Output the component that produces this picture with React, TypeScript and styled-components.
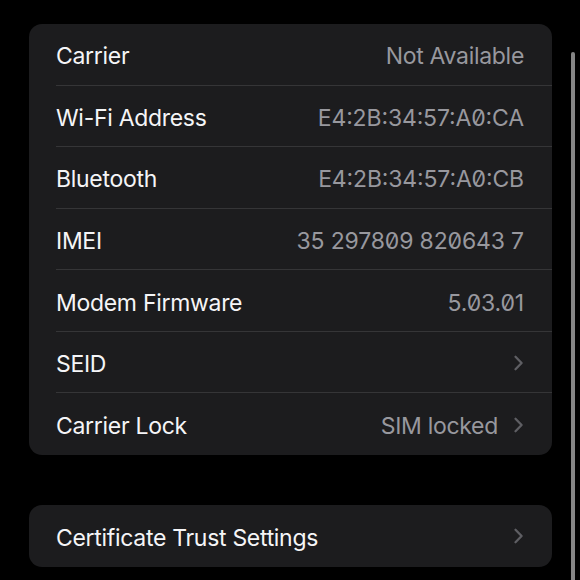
import React from "react";
import styled, { createGlobalStyle } from "styled-components";

const GlobalStyle = createGlobalStyle`
  html, body {
    margin: 0;
    padding: 0;
    background: #000000;
    height: 100%;
    overflow: hidden;
  }
  body {
    font-family: "Inter", "Noto Sans", "Liberation Sans", sans-serif;
    -webkit-font-smoothing: antialiased;
  }
`;

const Screen = styled.div`
  position: relative;
  width: 580px;
  height: 580px;
  background: #000000;
  box-sizing: border-box;
  padding: 24px 28px 0 29px;
  display: flex;
  flex-direction: column;
  gap: 50px;
  overflow: hidden;
`;

const Card = styled.div`
  background: #1c1c1e;
  border-radius: 13px;
  display: flex;
  flex-direction: column;
  overflow: hidden;
`;

const Row = styled.div`
  height: 61.57px;
  padding-left: 27px;
  display: flex;
  box-sizing: border-box;
`;

const RowContent = styled.div<{ $last?: boolean }>`
  flex: 1;
  display: flex;
  align-items: center;
  justify-content: space-between;
  padding: 4px 28px 0 0;
  border-bottom: ${(p) => (p.$last ? "none" : "1px solid #353537")};
`;

const Label = styled.span`
  font-size: 23px;
  color: #f5f5f7;
  letter-spacing: -0.3px;
`;

const Trailing = styled.div`
  display: flex;
  align-items: center;
  gap: 15px;
`;

const Value = styled.span<{ $mono?: boolean }>`
  font-size: 23px;
  color: #98989e;
  letter-spacing: ${(p) => (p.$mono ? "-0.15px" : "-0.3px")};
  font-feature-settings: ${(p) => (p.$mono ? '"zero" 1, "calt" 1' : "normal")};
`;

const ChevronSvg = styled.svg`
  width: 11px;
  height: 16px;
  display: block;
  margin-top: -3px;
`;

const ScrollIndicator = styled.div`
  position: absolute;
  left: 571px;
  top: 52px;
  width: 3.5px;
  height: 540px;
  border-radius: 2px;
  background: #858585;
`;

const Chevron = () => (
  <ChevronSvg viewBox="0 0 11 16" aria-hidden>
    <path
      d="M2.5 1.8 L8.6 8 L2.5 14.2"
      fill="none"
      stroke="#5e5e63"
      strokeWidth="2.3"
      strokeLinecap="round"
      strokeLinejoin="round"
    />
  </ChevronSvg>
);

type Item = { label: string; value?: string; mono?: boolean; chevron?: boolean };

const items: Item[] = [
  { label: "Carrier", value: "Not Available" },
  { label: "Wi-Fi Address", value: "E4:2B:34:57:A0:CA", mono: true },
  { label: "Bluetooth", value: "E4:2B:34:57:A0:CB", mono: true },
  { label: "IMEI", value: "35 297809 820643 7", mono: true },
  { label: "Modem Firmware", value: "5.03.01", mono: true },
  { label: "SEID", chevron: true },
  { label: "Carrier Lock", value: "SIM locked", chevron: true },
];

export default function App() {
  return (
    <>
      <GlobalStyle />
      <Screen>
        <Card>
          {items.map((it, i) => (
            <Row key={it.label}>
              <RowContent $last={i === items.length - 1}>
                <Label>{it.label}</Label>
                <Trailing>
                  {it.value && <Value $mono={it.mono}>{it.value}</Value>}
                  {it.chevron && <Chevron />}
                </Trailing>
              </RowContent>
            </Row>
          ))}
        </Card>
        <Card>
          <Row>
            <RowContent $last>
              <Label>Certificate Trust Settings</Label>
              <Trailing>
                <Chevron />
              </Trailing>
            </RowContent>
          </Row>
        </Card>
        <ScrollIndicator />
      </Screen>
    </>
  );
}
